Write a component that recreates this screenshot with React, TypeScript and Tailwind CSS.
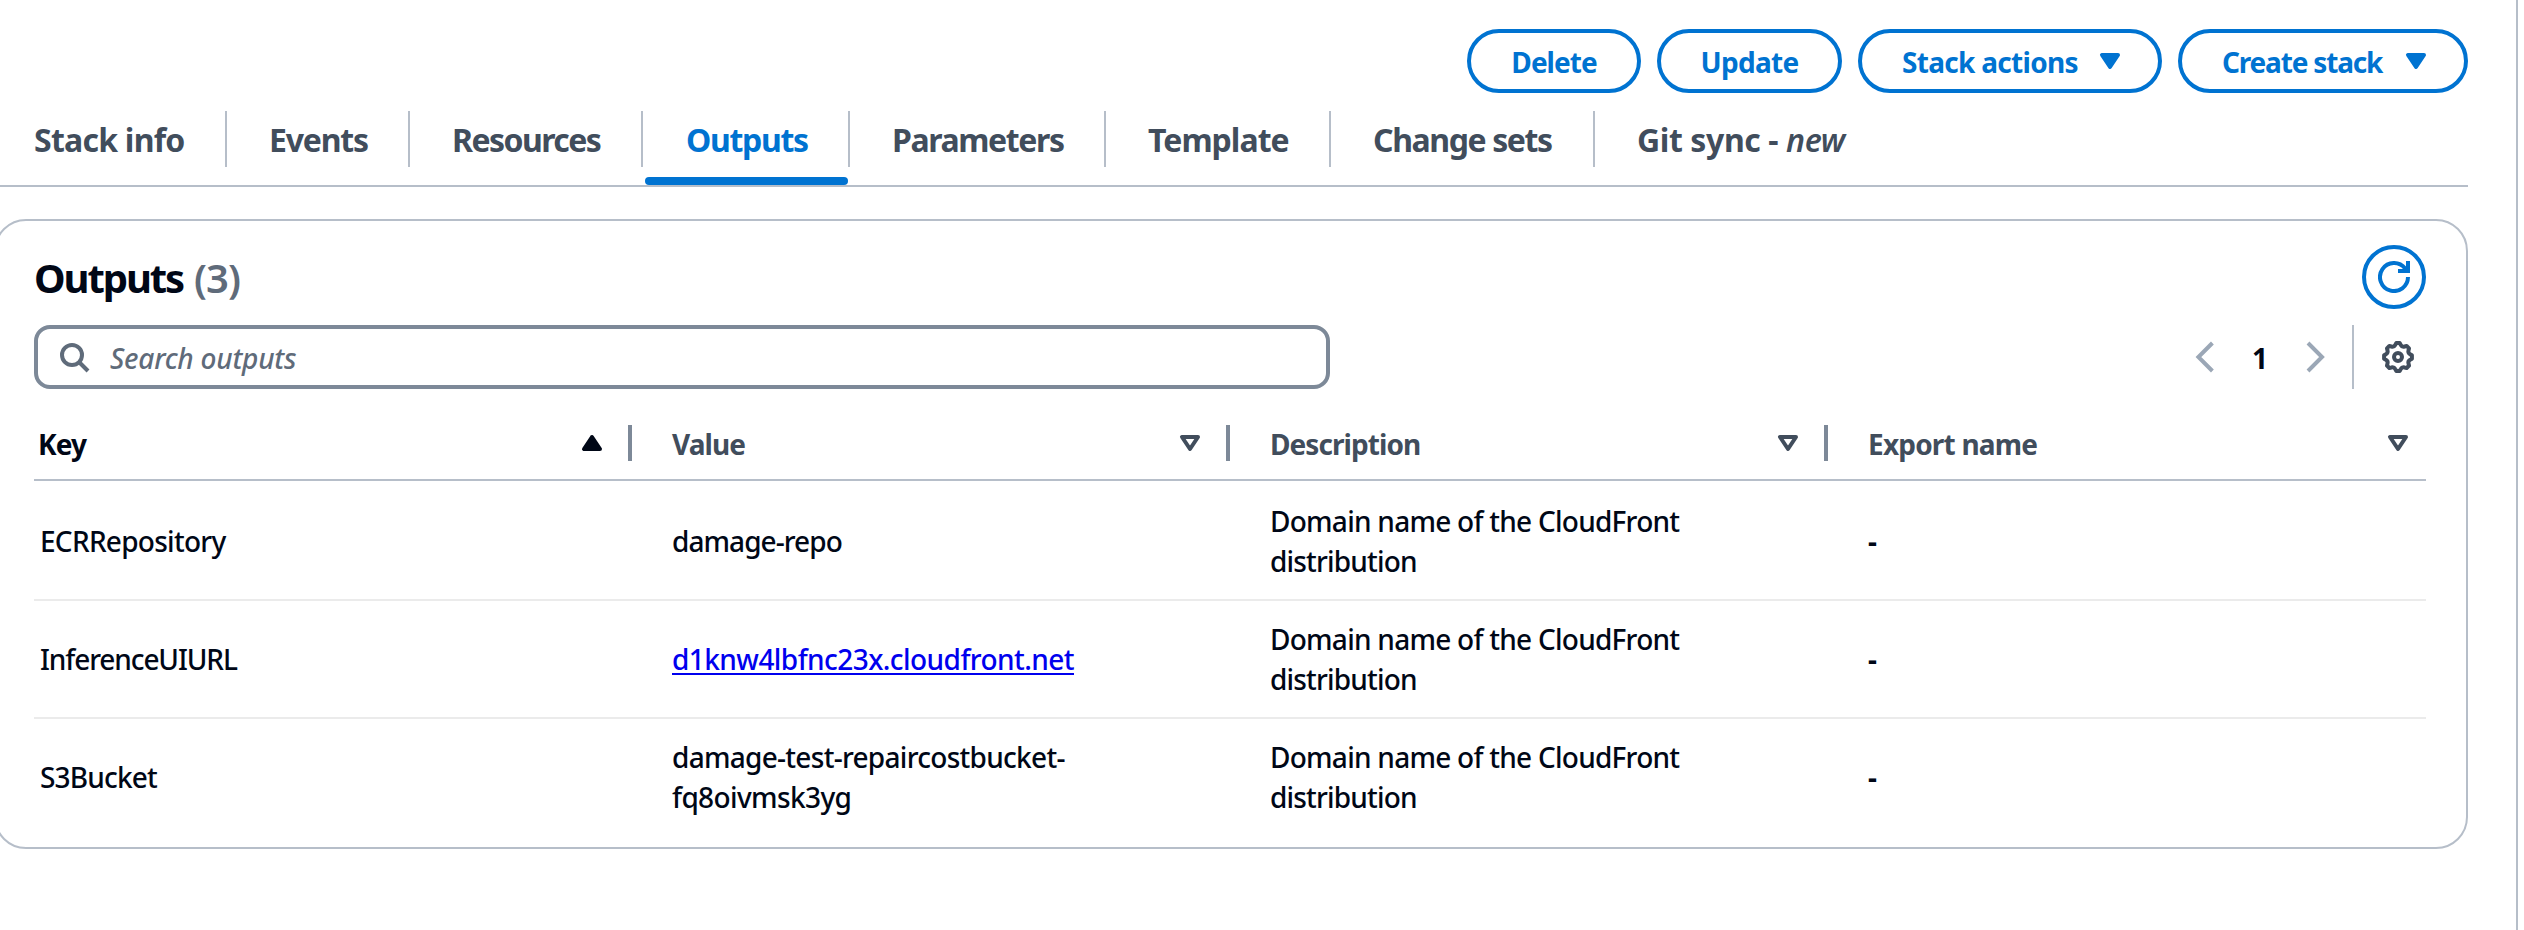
import React from "react";

type Label = { text: string; cls: string };

const tabs: { label: Label; box: string; active?: boolean; suffix?: string }[] = [
  { label: { text: "Stack info", cls: "tracking-[-0.75px]" }, box: "w-[227px] pl-[34px]" },
  { label: { text: "Events", cls: "tracking-[-1.2px]" }, box: "w-[183px] pl-[42px]" },
  { label: { text: "Resources", cls: "tracking-[-1.55px]" }, box: "w-[233px] pl-[42px]" },
  { label: { text: "Outputs", cls: "tracking-[-1.32px]" }, box: "w-[207px] pl-[43px]", active: true },
  { label: { text: "Parameters", cls: "tracking-[-1.39px]" }, box: "w-[256px] pl-[42px]" },
  { label: { text: "Template", cls: "tracking-[-0.97px]" }, box: "w-[225px] pl-[42px]" },
  { label: { text: "Change sets", cls: "tracking-[-1.4px]" }, box: "w-[264px] pl-[42px]" },
  { label: { text: "Git sync - ", cls: "tracking-[-0.4px]" }, box: "pl-[42px]", suffix: "new" },
];

const columns: { label: Label; pad: string; sorted?: boolean }[] = [
  { label: { text: "Key", cls: "tracking-[-0.85px]" }, pad: "pl-1", sorted: true },
  { label: { text: "Value", cls: "tracking-[-0.9px]" }, pad: "pl-[40px]" },
  { label: { text: "Description", cls: "tracking-[-0.93px]" }, pad: "pl-[40px]" },
  { label: { text: "Export name", cls: "tracking-[-0.8px]" }, pad: "pl-[40px]" },
];

const description: Label[] = [
  { text: "Domain name of the CloudFront", cls: "tracking-[-0.74px]" },
  { text: "distribution", cls: "tracking-[-0.82px]" },
];

const rows: { key: Label; value: Label[]; link?: boolean; box: string }[] = [
  {
    key: { text: "ECRRepository", cls: "tracking-[-0.73px]" },
    value: [{ text: "damage-repo", cls: "tracking-[-0.94px]" }],
    box: "h-[120px] pt-[2px] border-b-2",
  },
  {
    key: { text: "InferenceUIURL", cls: "tracking-[-1.1px]" },
    value: [{ text: "d1knw4lbfnc23x.cloudfront.net", cls: "tracking-[-0.56px]" }],
    link: true,
    box: "h-[118px] border-b-2",
  },
  {
    key: { text: "S3Bucket", cls: "tracking-[-0.83px]" },
    value: [
      { text: "damage-test-repaircostbucket-", cls: "tracking-[-0.71px]" },
      { text: "fq8oivmsk3yg", cls: "tracking-[-0.62px]" },
    ],
    box: "h-[116px]",
  },
];

function Icon({ className = "", children }: { className?: string; children: React.ReactNode }) {
  return (
    <svg
      viewBox="0 0 16 16"
      className={`size-8 shrink-0 ${className}`}
      fill="none"
      stroke="currentColor"
      strokeWidth={2}
    >
      {children}
    </svg>
  );
}

const Caret = ({ filled, up, className }: { filled?: boolean; up?: boolean; className?: string }) => (
  <Icon className={className}>
    <path
      d={up ? "M4 11h8L8 5z" : "M4 5h8l-4 6z"}
      fill={filled ? "currentColor" : "none"}
      strokeLinejoin="round"
    />
  </Icon>
);

function gearPath() {
  const pts: string[] = [];
  const at = (r: number, deg: number) => {
    const a = (deg * Math.PI) / 180;
    return `${(8 + r * Math.cos(a)).toFixed(2)} ${(8 + r * Math.sin(a)).toFixed(2)}`;
  };
  for (let i = 0; i < 8; i++) {
    const a = i * 45;
    pts.push(`${i ? "L" : "M"}${at(7, a - 7)} L${at(7, a + 7)} L${at(6.2, a + 13)} Q${at(5.3, a + 22.5)} ${at(6.2, a + 32)}`);
  }
  return pts.join(" ") + "Z";
}

function ActionButton({ label, box, caret }: { label: Label; box: string; caret?: boolean }) {
  return (
    <button
      className={`flex h-16 items-center rounded-full border-4 border-[#0073d1] text-[28px] leading-none font-bold text-[#0073d1] ${box}`}
    >
      <span className={`pt-[2px] ${label.cls}`}>{label.text}</span>
      {caret && <Caret filled />}
    </button>
  );
}

export default function App() {
  return (
    <div className="h-[930px] w-[2524px] overflow-hidden bg-white font-['Noto_Sans',sans-serif] whitespace-nowrap text-[#000716]">
      <main className="h-full w-[2518px] border-r-2 border-[#b6bec9] pr-12">
        <div className="flex justify-end gap-4 pt-[29px]">
          <ActionButton label={{ text: "Delete", cls: "tracking-[-0.98px]" }} box="w-[174px] justify-center" />
          <ActionButton label={{ text: "Update", cls: "tracking-[-0.7px]" }} box="w-[185px] justify-center" />
          <ActionButton
            label={{ text: "Stack actions", cls: "tracking-[-0.7px]" }}
            box="w-[304px] justify-between pr-8 pl-[40px]"
            caret
          />
          <ActionButton
            label={{ text: "Create stack", cls: "tracking-[-1.18px]" }}
            box="w-[290px] justify-between pr-8 pl-[40px]"
            caret
          />
        </div>

        <nav className="mt-[18px] flex h-[76px] border-b-2 border-[#b6bec9]">
          {tabs.map((t, i) => (
            <div
              key={t.label.text}
              className={`relative flex h-14 items-center text-[32px] leading-none font-bold ${
                i < tabs.length - 1 ? "border-r-2 border-[#b6bec9]" : ""
              } ${t.active ? "text-[#0073d1]" : "text-[#414d5c]"} ${t.box}`}
            >
              <span className={`pt-[2px] whitespace-pre ${t.label.cls}`}>
                {t.label.text}
                {t.suffix && <em className="font-semibold">{t.suffix}</em>}
              </span>
              {t.active && (
                <span className="absolute top-[66px] right-0 left-[2px] h-2 rounded-[4px] bg-[#0073d1]" />
              )}
            </div>
          ))}
        </nav>

        <section className="mt-8 -ml-[6px] h-[630px] w-[2474px] rounded-[32px] border-2 border-[#b6bec9] pt-6 pr-10 pl-[38px]">
          <div className="flex h-16 items-center justify-between">
            <h2 className="pt-[2px] text-[40px] leading-none font-bold">
              <span className="tracking-[-2.1px]">Outputs</span>
              <span className="ml-[11px] font-semibold tracking-[-0.9px] text-[#5f6b7a]">(3)</span>
            </h2>
            <button className="flex size-16 items-center justify-center rounded-full border-4 border-[#0073d1] text-[#0073d1]">
              <Icon>
                <path d="M10 5h5V0" />
                <path d="M15 8a7 7 0 1 1-1.5-4.33L14.6 5" />
              </Icon>
            </button>
          </div>

          <div className="mt-4 flex items-center justify-between">
            <div className="flex h-16 w-[1296px] items-center rounded-2xl border-4 border-[#7d8998] pl-5 text-[#5f6b7a]">
              <Icon>
                <circle cx="7" cy="7" r="5" />
                <path d="M10.5 10.5 15 15" />
              </Icon>
              <span className="ml-5 pt-[2px] text-[28px] leading-none font-medium tracking-[-0.25px] italic">
                Search outputs
              </span>
            </div>
            <div className="flex h-16 items-center">
              <Icon className="text-[#9ba7b6]">
                <path d="m11.2 1-7 7 7 7" />
              </Icon>
              <span className="w-[76px] pt-[2px] text-center text-[28px] leading-none font-bold">1</span>
              <Icon className="text-[#9ba7b6]">
                <path d="m5 1 7 7-7 7" />
              </Icon>
              <div className="ml-[22px] h-16 w-[2px] bg-[#b6bec9]" />
              <Icon className="mr-3 ml-7 text-[#414d5c]">
                <path d={gearPath()} strokeLinejoin="round" />
                <circle cx="8" cy="8" r="2" />
              </Icon>
            </div>
          </div>

          <div className="grid h-[92px] grid-cols-4 border-b-2 border-[#b6bec9] pt-9 pb-[18px] text-[28px] leading-none font-bold">
            {columns.map((c, i) => {
              const last = i === columns.length - 1;
              return (
                <div
                  key={c.label.text}
                  className={`flex items-center justify-between ${c.pad} ${
                    last ? "pr-3" : "border-r-4 border-[#7d8998] pr-5"
                  } ${c.sorted ? "text-[#000716]" : "text-[#414d5c]"}`}
                >
                  <span className={`pt-[2px] ${c.label.cls}`}>{c.label.text}</span>
                  <Caret filled={c.sorted} up={c.sorted} />
                </div>
              );
            })}
          </div>

          {rows.map((r) => (
            <div
              key={r.key.text}
              className={`grid grid-cols-4 items-center border-[#ebebeb] text-[28px] leading-10 font-medium ${r.box}`}
            >
              <div className="pl-[6px]">
                <span className={r.key.cls}>{r.key.text}</span>
              </div>
              <div className="pl-10">
                {r.value.map((v) => (
                  <div key={v.text}>
                    {r.link ? (
                      <a className={`text-[#0000ee] underline decoration-2 underline-offset-[3px] ${v.cls}`}>{v.text}</a>
                    ) : (
                      <span className={v.cls}>{v.text}</span>
                    )}
                  </div>
                ))}
              </div>
              <div className="pl-10">
                {description.map((d) => (
                  <div key={d.text} className={d.cls}>
                    {d.text}
                  </div>
                ))}
              </div>
              <div className="pl-10 font-bold">-</div>
            </div>
          ))}
        </section>
      </main>
    </div>
  );
}
